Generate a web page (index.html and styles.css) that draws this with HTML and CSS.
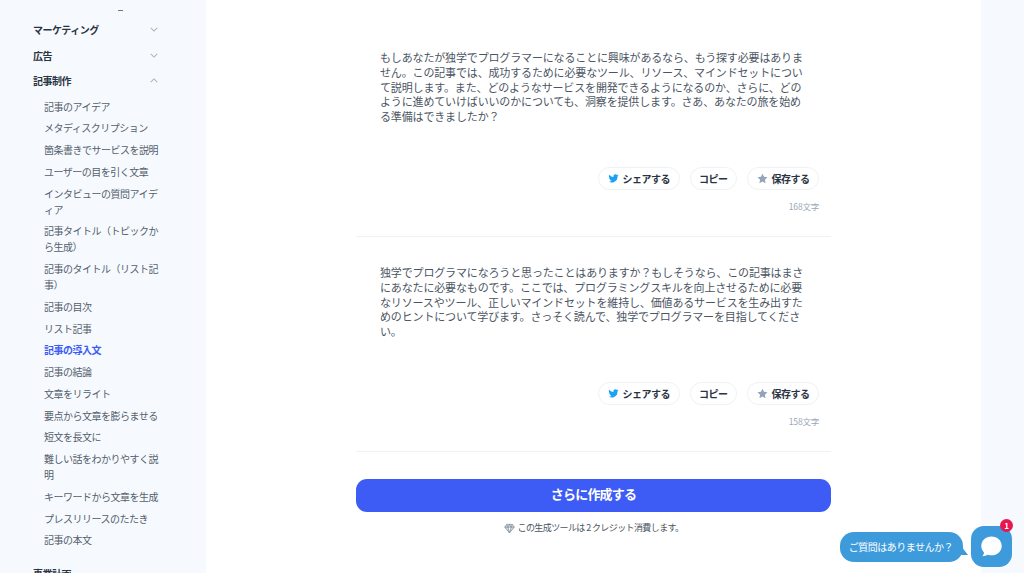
FILE: index.html
```html
<!DOCTYPE html>
<html lang="ja">
<head>
    <meta charset="UTF-8">
    <meta name="viewport" content="width=device-width, initial-scale=1.0">
    <title>記事の導入文</title>
    <link rel="stylesheet" href="styles.css">
</head>
<body>
    <aside class="sidebar">
        <div class="cut-off"></div>
        <div class="group">
            <span>マーケティング</span>
            <svg class="chevron" viewBox="0 0 10 6"><path d="M1 1l4 4 4-4"/></svg>
        </div>
        <div class="group">
            <span>広告</span>
            <svg class="chevron" viewBox="0 0 10 6"><path d="M1 1l4 4 4-4"/></svg>
        </div>
        <div class="group">
            <span>記事制作</span>
            <svg class="chevron" viewBox="0 0 10 6"><path d="M1 5l4-4 4 4"/></svg>
        </div>
        <ul class="menu">
            <li>記事のアイデア</li>
            <li>メタディスクリプション</li>
            <li>箇条書きでサービスを説明</li>
            <li>ユーザーの目を引く文章</li>
            <li>インタビューの質問アイディア</li>
            <li>記事タイトル（トピックから生成）</li>
            <li>記事のタイトル（リスト記事）</li>
            <li>記事の目次</li>
            <li>リスト記事</li>
            <li class="active">記事の導入文</li>
            <li>記事の結論</li>
            <li>文章をリライト</li>
            <li>要点から文章を膨らませる</li>
            <li>短文を長文に</li>
            <li>難しい話をわかりやすく説明</li>
            <li>キーワードから文章を生成</li>
            <li>プレスリリースのたたき</li>
            <li>記事の本文</li>
        </ul>
        <div class="group group-last"><span>事業計画</span></div>
    </aside>

    <main class="main">
        <div class="column">
            <section class="result">
                <p class="result-text">もしあなたが独学でプログラマーになることに興味があるなら、もう探す必要はありません。この記事では、成功するために必要なツール、リソース、マインドセットについて説明します。また、どのようなサービスを開発できるようになるのか、さらに、どのように進めていけばいいのかについても、洞察を提供します。さあ、あなたの旅を始める準備はできましたか？</p>
                <div class="actions">
                    <button class="pill">
                        <svg class="icon" viewBox="0 0 24 24"><path class="tw" d="M23 5.100c-.8.400-1.700.6-2.600.7.900-.6 1.600-1.400 2-2.500-.9.500-1.800.9-2.900 1.100a4.500 4.500 0 0 0-7.700 4.100C8 8.300 4.700 6.500 2.500 3.800c-1.200 2.100-.6 4.700 1.400 6-.7 0-1.400-.2-2-.6 0 2.200 1.500 4.100 3.600 4.500-.7.200-1.400.2-2 .1.600 1.800 2.200 3.100 4.200 3.100A9 9 0 0 1 1 18.800 12.800 12.800 0 0 0 20.700 7.400c.9-.6 1.700-1.400 2.300-2.300z"/></svg>
                        シェアする
                    </button>
                    <button class="pill">コピー</button>
                    <button class="pill">
                        <svg class="icon" viewBox="0 0 24 24"><path class="star" d="M12 1.500l3.300 6.900 7.500 1-5.500 5.200 1.400 7.500-6.700-3.700-6.700 3.700 1.400-7.500L1.200 9.400l7.500-1z"/></svg>
                        保存する
                    </button>
                </div>
                <div class="count">168文字</div>
            </section>
            <section class="result">
                <p class="result-text">独学でプログラマになろうと思ったことはありますか？もしそうなら、この記事はまさにあなたに必要なものです。ここでは、プログラミングスキルを向上させるために必要なリソースやツール、正しいマインドセットを維持し、価値あるサービスを生み出すためのヒントについて学びます。さっそく読んで、独学でプログラマーを目指してください。</p>
                <div class="actions">
                    <button class="pill">
                        <svg class="icon" viewBox="0 0 24 24"><path class="tw" d="M23 5.100c-.8.400-1.700.6-2.600.7.900-.6 1.600-1.400 2-2.500-.9.500-1.800.9-2.900 1.100a4.500 4.500 0 0 0-7.700 4.100C8 8.300 4.700 6.500 2.500 3.800c-1.200 2.100-.6 4.700 1.400 6-.7 0-1.400-.2-2-.6 0 2.200 1.500 4.100 3.600 4.500-.7.200-1.400.2-2 .1.600 1.800 2.200 3.100 4.200 3.100A9 9 0 0 1 1 18.800 12.800 12.800 0 0 0 20.700 7.400c.9-.6 1.700-1.400 2.300-2.300z"/></svg>
                        シェアする
                    </button>
                    <button class="pill">コピー</button>
                    <button class="pill">
                        <svg class="icon" viewBox="0 0 24 24"><path class="star" d="M12 1.500l3.300 6.900 7.500 1-5.500 5.200 1.400 7.500-6.700-3.700-6.700 3.700 1.400-7.500L1.200 9.400l7.500-1z"/></svg>
                        保存する
                    </button>
                </div>
                <div class="count">158文字</div>
            </section>
            <button class="create">さらに作成する</button>
            <div class="credit">
                <svg class="gem" viewBox="0 0 12 12"><path d="M3 1.500h6l2.200 3L6 10.800.8 4.500zM.8 4.500h10.400M4.200 4.500L6 10.800l1.800-6.300M3 1.500l1.200 3L6 1.500l1.800 3L9 1.500"/></svg>
                この生成ツールは 2 クレジット消費します。
            </div>
        </div>
    </main>

    <div class="chat">
        <div class="chat-bubble">ご質問はありませんか？</div>
        <div class="chat-button">
            <svg viewBox="0 0 24 24"><path d="M12 2.500c5.500 0 9.800 4 9.800 9s-4.300 9-9.800 9c-1.300 0-2.500-.2-3.600-.6-1.400.9-3 1.300-5.200 1.400.9-1 1.500-2.200 1.600-3.600-1.600-1.600-2.600-3.800-2.600-6.200 0-5 4.300-9 9.800-9z"/></svg>
            <span class="chat-badge">1</span>
        </div>
    </div>
</body>
</html>
```

FILE: styles.css
```css
body {
    font-family: "Noto Sans CJK JP", "Noto Sans", sans-serif;
    display: flex;
    height: 573px;
    margin: 0;
    overflow: hidden;
    background-color: #f6faff;
    color: #2b3442;
}
.sidebar {
    width: 206px;
    height: 573px;
    flex-shrink: 0;
    padding: 10px 0 0 33px;
    box-sizing: border-box;
    font-size: 10px;
    letter-spacing: -.5px;
    overflow: hidden;
}
.cut-off {
    width: 5px;
    height: 1px;
    margin-left: 85px;
    margin-bottom: 10.500px;
    background-color: #777;
}
.group {
    display: flex;
    justify-content: space-between;
    align-items: center;
    width: 125px;
    height: 16px;
    margin-bottom: 9.500px;
    font-weight: 700;
    color: #2b3442;
}
.chevron {
    width: 8px;
    height: 5px;
    fill: none;
    stroke: #a9b4c2;
    stroke-width: 1.300;
}
.menu {
    list-style: none;
    margin: 10px 0 0;
    padding: 0 0 0 11px;
    width: 116px;
    color: #555e6b;
}
.menu li {
    line-height: 16px;
    margin-bottom: 5.750px;
}
.menu .active {
    color: #3d5cf5;
    font-weight: 700;
}
.group-last {
    margin-top: 17px;
}
.main {
    width: 775px;
    flex-shrink: 0;
    background-color: #fff;
}
.column {
    width: 475px;
    margin: 0 auto;
}
.result {
    height: 215px;
    box-sizing: border-box;
    padding: 28px 24px 0 24px;
    border-bottom: 1px solid #eef2f5;
    display: flex;
    flex-direction: column;
}
.result:first-child {
    height: 237px;
    padding-top: 50px;
}
.result-text {
    height: 96px;
    margin: 0;
    font-size: 11px;
    line-height: 14.800px;
    letter-spacing: -.15px;
    color: #4b5563;
}
.actions {
    display: flex;
    justify-content: flex-end;
    gap: 10px;
    margin: 21px -12px 0 0;
}
.pill {
    display: flex;
    align-items: center;
    gap: 4px;
    height: 23px;
    padding: 0 8.500px;
    border: 1px solid #eef2f6;
    border-radius: 12px;
    background-color: #fff;
    font-family: inherit;
    font-size: 10px;
    letter-spacing: -.5px;
    font-weight: 700;
    color: #2b3442;
}
.icon {
    width: 11px;
    height: 11px;
}
.tw {
    fill: #1da1f2;
}
.star {
    fill: #94a3b8;
}
.count {
    margin: 10px -12px 0 0;
    text-align: right;
    font-size: 8.500px;
    letter-spacing: -.2px;
    line-height: 12px;
    color: #9aa7b8;
}
.create {
    display: block;
    width: 100%;
    height: 33px;
    margin-top: 27px;
    padding: 0 0 4px;
    border: none;
    border-radius: 11px;
    background-color: #3d5cf5;
    color: #fff;
    font-family: inherit;
    font-size: 13px;
    letter-spacing: -.8px;
    font-weight: 700;
}
.credit {
    display: flex;
    justify-content: center;
    align-items: center;
    gap: 3px;
    margin-top: 9px;
    font-size: 9px;
    letter-spacing: -.6px;
    line-height: 14px;
    color: #4b5563;
}
.gem {
    width: 11px;
    height: 11px;
    fill: #d8e0ea;
    stroke: #7c8796;
    stroke-width: .8;
}
.chat {
    position: fixed;
    right: 12px;
    bottom: 6px;
    display: flex;
    align-items: center;
    gap: 8px;
}
.chat-bubble {
    position: relative;
    height: 30px;
    padding: 0 10px 0 9px;
    border-radius: 14px;
    background-color: #3d9bdc;
    color: #fff;
    font-size: 10px;
    letter-spacing: -.5px;
    line-height: 30px;
}
.chat-bubble:after {
    content: "";
    position: absolute;
    right: -5px;
    bottom: 7px;
    border-left: 7px solid #3d9bdc;
    border-top: 9px solid transparent;
}
.chat-button {
    position: relative;
    width: 41px;
    height: 41px;
    border-radius: 13px;
    background-color: #3d9bdc;
    display: flex;
    align-items: center;
    justify-content: center;
}
.chat-button svg {
    width: 25px;
    height: 25px;
    fill: #fff;
}
.chat-badge {
    position: absolute;
    top: -7px;
    right: -1px;
    width: 13px;
    height: 13px;
    border-radius: 50%;
    background-color: #e8174f;
    color: #fff;
    font-size: 8px;
    font-weight: 700;
    line-height: 13px;
    text-align: center;
}
```
